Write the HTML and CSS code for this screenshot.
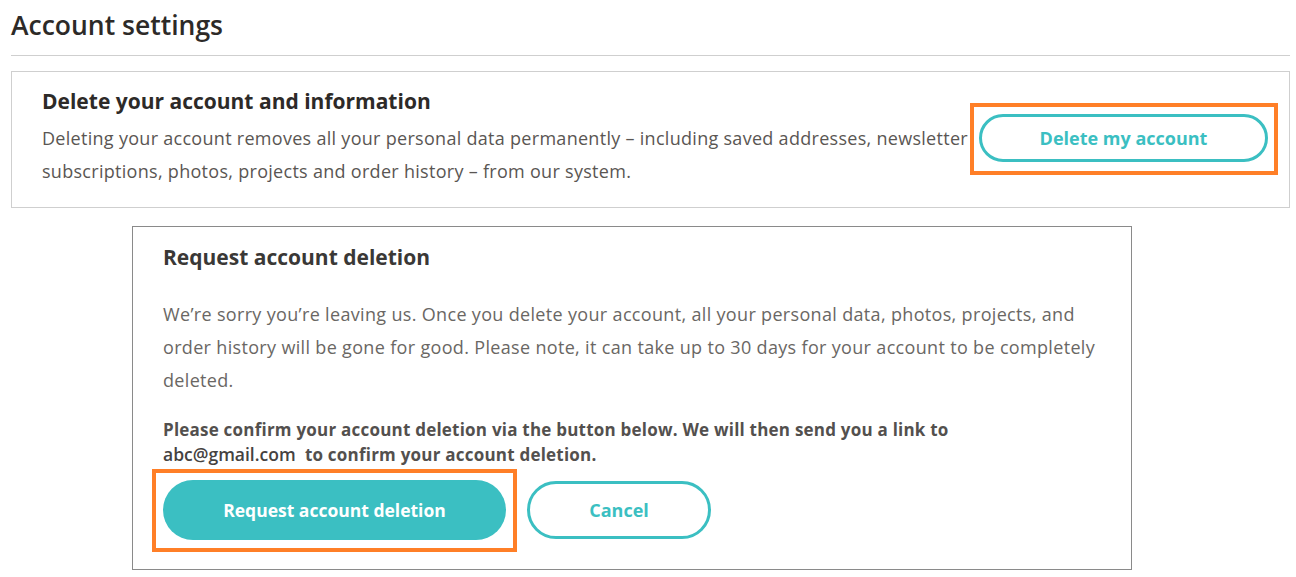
FILE: index.html
```html
<!DOCTYPE html>
<html lang="en">
<head>
<meta charset="utf-8">
<title>Account settings</title>
<link rel="stylesheet" href="styles.css">
</head>
<body>
<main class="page">
  <h1 class="page-title">Account settings</h1>
  <hr class="rule">
  <section class="card">
    <div class="card-text">
      <h2 class="card-title">Delete your account and information</h2>
      <p class="card-body">Deleting your account removes all your personal data permanently – including saved addresses, newsletter<br>subscriptions, photos, projects and order history – from our system.</p>
    </div>
    <div class="highlight highlight-card">
      <button class="btn btn-outline btn-delete">Delete my account</button>
    </div>
  </section>

  <section class="dialog">
    <h2 class="dialog-title">Request account deletion</h2>
    <p class="dialog-text">We’re sorry you’re leaving us. Once you delete your account, all your personal data, photos, projects, and<br>order history will be gone for good. Please note, it can take up to 30 days for your account to be completely<br>deleted.</p>
    <p class="dialog-confirm">Please confirm your account deletion via the button below. We will then send you a link to<br><span class="email">abc@gmail.com</span>&nbsp; to confirm your account deletion.</p>
    <div class="dialog-actions">
      <div class="highlight highlight-dialog">
        <button class="btn btn-filled">Request account deletion</button>
      </div>
      <button class="btn btn-outline btn-cancel">Cancel</button>
    </div>
  </section>
</main>
</body>
</html>
```

FILE: styles.css
```css
* { box-sizing: border-box; }

html, body {
  margin: 0;
  padding: 0;
  background: #ffffff;
}

body {
  font-family: "Open Sans", "Noto Sans", sans-serif;
  color: #333333;
}

.page {
  padding: 0 6px 0 11px;
}

.page-title {
  margin: 0;
  padding-top: 9px;
  font-size: 26.5px;
  line-height: 32px;
  font-weight: 600;
  color: #2d2a28;
}

.rule {
  margin: 14px 0 0 0;
  border: 0;
  border-top: 1px solid #cfcfcf;
  height: 0;
}

.card {
  margin-top: 15px;
  border: 1px solid #cfcfcf;
  display: flex;
  align-items: center;
  justify-content: space-between;
  padding: 17px 11px 19px 30px;
}

.card-title {
  margin: 0;
  font-size: 21px;
  line-height: 24px;
  font-weight: 700;
  color: #2d2a28;
}

.card-body {
  margin: 9px 0 0 0;
  font-size: 18px;
  line-height: 33px;
  letter-spacing: 0.29px;
  color: #5a5653;
  white-space: nowrap;
}

.highlight {
  border: 4px solid #ff7f27;
  flex: none;
}

.highlight-card {
  padding: 7px 6px 9px 5px;
}

.btn {
  font-family: "Open Sans", "Noto Sans", sans-serif;
  font-weight: 700;
  border-radius: 999px;
  cursor: pointer;
  display: flex;
  align-items: center;
  justify-content: center;
}

.btn-outline {
  background: #ffffff;
  border: 3px solid #3bbfc2;
  color: #3bbfc2;
}

.btn-delete {
  width: 289px;
  height: 48px;
  font-size: 18px;
}

.dialog {
  margin: 18px 0 8px 121px;
  width: 1000px;
  border: 1px solid #8a8a8a;
  padding: 18px 30px 17px 30px;
}

.dialog-title {
  margin: 0;
  font-size: 21px;
  line-height: 24px;
  font-weight: 700;
  color: #3a3836;
}

.dialog-text {
  margin: 29px 0 0 0;
  font-size: 18px;
  line-height: 33px;
  letter-spacing: 0.33px;
  color: #6a6764;
  white-space: nowrap;
}

.dialog-confirm {
  margin: 21px 0 0 0;
  font-size: 17px;
  line-height: 24px;
  letter-spacing: 0.22px;
  font-weight: 700;
  color: #53504e;
  white-space: nowrap;
}

.email {
  font-family: "Open Sans", "Noto Sans", sans-serif;
  font-weight: 600;
  font-size: 17.5px;
  letter-spacing: 0;
  color: #45423f;
}

.dialog-actions {
  margin-top: 2px;
  display: flex;
  align-items: center;
  gap: 10px;
}

.highlight-dialog {
  margin-left: -11px;
  padding: 7px 7px 8px 7px;
}

.btn-filled {
  width: 343px;
  height: 60px;
  background: #3bbfc2;
  border: 0;
  color: #ffffff;
  font-size: 17.5px;
}

.btn-cancel {
  width: 184px;
  height: 58px;
  margin-top: -2px;
  font-size: 18px;
}
```
